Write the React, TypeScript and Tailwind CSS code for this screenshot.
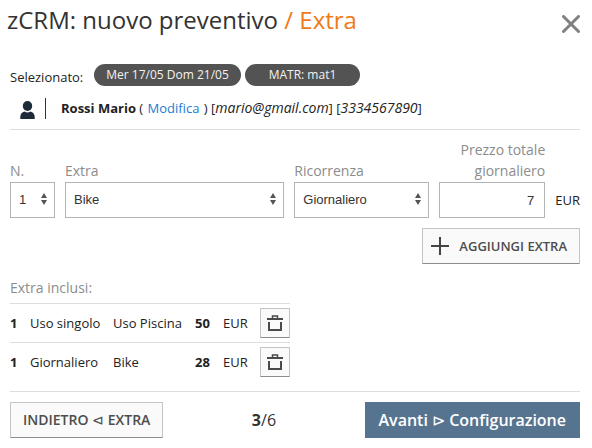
import type { ReactNode } from 'react'

const EXTRAS = [
  { qty: 1, type: 'Uso singolo', name: 'Uso Piscina', price: 50 },
  { qty: 1, type: 'Giornaliero', name: 'Bike', price: 28 },
]

const labelClass = 'mb-px block text-sm leading-[21px] text-[#8c8c8c]'

const fieldClass =
  'h-9 w-full border border-[#b4b4b4] bg-white text-[13px] text-[#333] font-[Liberation_Sans,sans-serif]'

const buttonClass =
  'border border-[#c4c4c4] border-b-[#8c8c8c] rounded-[1px] bg-[#fafafa] font-semibold text-[#4d4d4d]'

type SelectFieldProps = {
  id: string
  label: string
  className: string
  options: string[]
}

function SelectField({ id, label, className, options }: SelectFieldProps) {
  return (
    <div className={className}>
      <label htmlFor={id} className={labelClass}>
        {label}
      </label>
      <div className="relative">
        <select id={id} className={`${fieldClass} appearance-none pl-2 pr-4`}>
          {options.map((option) => (
            <option key={option}>{option}</option>
          ))}
        </select>
        <svg
          viewBox="0 0 6 12"
          className="pointer-events-none absolute right-2 top-[11px] h-3 w-1.5 fill-[#555]"
          aria-hidden="true"
        >
          <path d="M3 0l3 5H0zM3 12l3-5H0z" />
        </svg>
      </div>
    </div>
  )
}

function Pill({ className, children }: { className: string; children: ReactNode }) {
  return (
    <span
      className={`h-[22px] rounded-full bg-[#535353] text-center text-xs leading-[22px] text-[#f2f2f2] ${className}`}
    >
      {children}
    </span>
  )
}

function TrashIcon() {
  return (
    <svg viewBox="0 0 16 16" className="h-4 w-4" fill="none" stroke="#4a4a4a" aria-hidden="true">
      <path d="M0 4h16" strokeWidth="2" />
      <path d="M5.5 3V1h5v2" strokeWidth="1.5" />
      <path d="M2 7v8h12V7" strokeWidth="2" />
    </svg>
  )
}

export default function App() {
  return (
    <div className="bg-white pl-2.5 pr-3 pb-2.5 font-[Open_Sans,sans-serif] text-[13px] leading-5 text-[#222]">
      {/* Title */}
      <header className="-ml-[3px] flex items-center justify-between pt-1">
        <h1 className="text-2xl leading-8 text-[#333]">
          zCRM: nuovo preventivo <span className="text-[#ef7b17]">/ Extra</span>
        </h1>
        <button type="button" aria-label="Chiudi" className="pt-2">
          <svg viewBox="0 0 18 18" className="h-[18px] w-[18px]" stroke="#808080" strokeWidth="3" strokeLinecap="round" aria-hidden="true">
            <path d="M1.5 1.5l15 15M16.5 1.5l-15 15" />
          </svg>
        </button>
      </header>

      <main>
        {/* Selection summary */}
        <div className="mt-7 flex items-start">
          <span className="w-[84px] pt-[3px]">Selezionato:</span>
          <div className="flex gap-1">
            <Pill className="w-[147px]">Mer 17/05 Dom 21/05</Pill>
            <Pill className="w-[115px]">MATR: mat1</Pill>
          </div>
        </div>

        {/* Customer */}
        <div className="flex items-center border-b border-[#dedede] py-2.5">
          <svg viewBox="0 0 16 18" className="ml-2.5 mt-1 h-[18px] w-4 fill-[#1d2b38]" aria-hidden="true">
            <ellipse cx="7.5" cy="5" rx="4.7" ry="5" />
            <path d="M.3 18v-2.2c0-2.6 1.8-4.6 4.2-5.2 2 1.2 4 1.2 6 0 2.4.6 4.2 2.6 4.2 5.2V18z" />
          </svg>
          <p className="ml-[9px] border-l border-[#333] pl-[15px] leading-[21px]">
            <b>Rossi Mario</b> ({' '}
            <a href="#modifica" className="px-px text-[#1c7cd0]">
              Modifica
            </a>{' '}
            ) [<i className="text-sm leading-5">mario@gmail.com</i>] [
            <i className="text-sm leading-5">3334567890</i>]
          </p>
        </div>

        {/* New extra */}
        <form>
          <div className="mt-[9px] flex items-end gap-2.5">
            <SelectField id="qty" label="N." className="w-[45px]" options={['1', '2', '3']} />
            <SelectField id="extra" label="Extra" className="min-w-0 flex-1" options={['Bike', 'Uso Piscina']} />
            <SelectField
              id="recurrence"
              label="Ricorrenza"
              className="w-[135px]"
              options={['Giornaliero', 'Uso singolo']}
            />
            <div className="w-[106px]">
              <label htmlFor="price" className={`${labelClass} text-right`}>
                Prezzo totale giornaliero
              </label>
              <input id="price" type="text" defaultValue="7" className={`${fieldClass} px-2.5 text-right`} />
            </div>
            <span className="pb-2">EUR</span>
          </div>
          <div className="mt-2.5 flex justify-end">
            <button type="button" className={`${buttonClass} flex h-9 items-center gap-2.5 px-2 pr-3`}>
              <svg viewBox="0 0 18 18" className="h-[18px] w-[18px]" stroke="#444" strokeWidth="2" aria-hidden="true">
                <path d="M9 0v18M0 9h18" />
              </svg>
              AGGIUNGI EXTRA
            </button>
          </div>
        </form>

        {/* Included extras */}
        <section>
          <h2 className="mt-3.5 text-sm leading-5 text-[#8c8c8c]">Extra inclusi:</h2>
          <table className="mt-[5px] w-[280px] table-fixed border-separate border-spacing-0">
            <tbody>
              {EXTRAS.map((extra) => (
                <tr key={extra.name} className="h-[39px] *:border-t *:border-[#dedede] *:p-0">
                  <td className="w-5 font-bold">{extra.qty}</td>
                  <td className="w-[83px]">{extra.type}</td>
                  <td className="w-[82px]">{extra.name}</td>
                  <td className="w-7 font-bold">{extra.price}</td>
                  <td>EUR</td>
                  <td className="w-[30px]">
                    <button
                      type="button"
                      aria-label={`Elimina ${extra.name}`}
                      className={`${buttonClass} flex h-[30px] w-[30px] items-center justify-center`}
                    >
                      <TrashIcon />
                    </button>
                  </td>
                </tr>
              ))}
            </tbody>
          </table>
        </section>
      </main>

      {/* Wizard navigation */}
      <footer className="mt-2.5 flex items-center justify-between border-t border-[#dedede] pt-2.5">
        <button type="button" className={`${buttonClass} h-9 px-3 text-sm`}>
          INDIETRO <span className="font-normal">⊲</span> EXTRA
        </button>
        <span className="text-base text-[#333]">
          <b>3</b>/6
        </span>
        <button type="button" className="h-9 bg-[#56748f] px-3.5 text-base font-semibold text-white">
          Avanti <span className="font-normal">⊳</span> Configurazione
        </button>
      </footer>
    </div>
  )
}
